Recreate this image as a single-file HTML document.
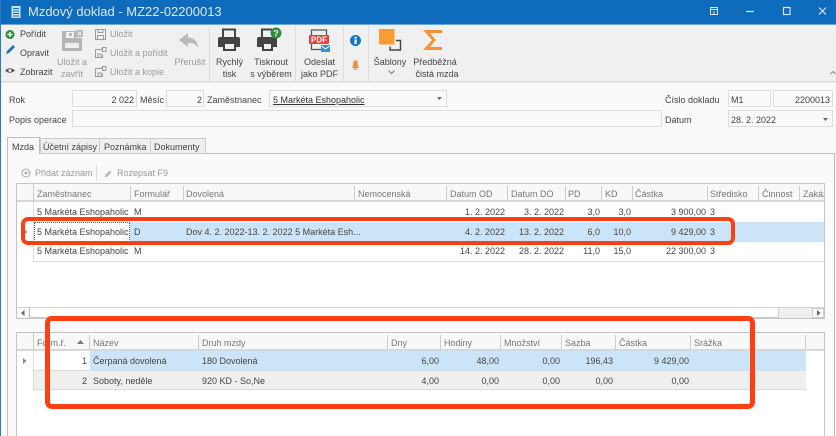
<!DOCTYPE html>
<html lang="cs"><head><meta charset="utf-8"><title>Mzdový doklad</title>
<style>
html,body{margin:0;padding:0;width:836px;height:436px;overflow:hidden;background:#fafafa}
body{position:relative;font-family:"Liberation Sans",sans-serif;font-size:9px;color:#444}
div,span{position:absolute;box-sizing:border-box}
.t{white-space:nowrap;line-height:12px;margin-top:1px}
.r{white-space:nowrap;line-height:12px;text-align:right;margin-top:1px}
.c{white-space:nowrap;line-height:12px;text-align:center;margin-top:1px}
.g{color:#9a9a9a}
.h{color:#777;white-space:nowrap;line-height:12px;margin-top:1px}
.s{width:1px;background:#ccc}
.f{border:1px solid #ddd;background:#fafafa}
svg{position:absolute;overflow:visible}
</style></head><body>
<div style="left:0;top:0;width:836px;height:24px;background:#0f6cbd"></div>
<div style="left:0;top:24px;width:836px;height:1px;background:#6ba6da"></div>
<div style="left:0;top:25px;width:836px;height:56px;background:#f0f0f0"></div>
<div style="left:0;top:81px;width:836px;height:2px;background:#e3e3e3"></div>
<div style="left:0;top:0;width:1px;height:436px;background:#2a7cc7"></div>

<svg style="left:10px;top:5px" width="13" height="14"><rect x="1.5" y="1" width="9" height="12" fill="#cfe2f3"/><path d="M3 3.5h6M3 6h6M3 8.5h6M3 11h6" stroke="#0f6cbd"/></svg>
<div class="t" style="left:28px;top:2px;font-size:13px;line-height:18px;color:#dbe9f6">Mzdový doklad - MZ22-02200013</div>
<svg style="left:709px;top:6px" width="120" height="12" fill="none" stroke="#d6e6f5"><rect x="1.5" y="1.5" width="7" height="7"/><path d="M1.5 3.5h7M5 5v4" stroke-width="1"/><path d="M37 5.5h8" stroke-width="1.2"/><rect x="74.5" y="1.5" width="6.5" height="7" stroke-width="1.2"/><path d="M110 1.500l7 7M117 1.500l-7 7" stroke-width="1.2"/></svg>

<!-- toolbar separators -->
<div class="s" style="left:209px;top:26px;height:55px;background:#ddd"></div>
<div class="s" style="left:295px;top:26px;height:55px;background:#ddd"></div>
<div class="s" style="left:343px;top:26px;height:55px;background:#ddd"></div>
<div class="s" style="left:368px;top:26px;height:55px;background:#ddd"></div>

<svg style="left:5px;top:29px" width="11" height="50">
<circle cx="5" cy="5.500" r="4.500" fill="#2e8b3d"/><path d="M2.500 5.500h5M5 3v5" stroke="#fff" stroke-width="1.400"/>
<path d="M1 25l1-3 6-6 2 2-6 6z" fill="#1c6fc4"/>
<path d="M0 41.500q5-4.500 10 0q-5 4.500-10 0z" fill="#555"/><circle cx="5" cy="41.500" r="1.500" fill="#f0f0f0"/></svg>
<div class="t" style="left:20px;top:27px">Pořídit</div>
<div class="t" style="left:20px;top:46px">Opravit</div>
<div class="t" style="left:20px;top:65px">Zobrazit</div>

<svg style="left:61px;top:29px" width="22" height="23"><path d="M1 2h14v7h6v13H1z" fill="#b5b5b5"/><rect x="4" y="14" width="14" height="5" fill="#f0f0f0"/><rect x="5" y="3" width="8" height="6" fill="#f0f0f0"/><rect x="8" y="4" width="3" height="3" fill="#b5b5b5"/><rect x="15" y="1" width="7" height="7" fill="#b5b5b5"/><path d="M16.500 2.500l4 4M20.500 2.500l-4 4" stroke="#f0f0f0"/></svg>
<div class="c g" style="left:52px;top:55px;width:40px">Uložit a</div>
<div class="c g" style="left:52px;top:67px;width:40px">zavřít</div>

<svg style="left:95px;top:29px" width="12" height="50" fill="none" stroke="#9a9a9a"><path d="M.5 .5h10v10H.5zM3 .5v3h5v-3M2.500 10.500v-4h6v4"/><path d="M.5 20.500h6v-1M.5 20.500v8h7v-3M3 28v-3h3v3M7.500 18.500h3.500v4h-3.500z"/><path d="M.5 39.500h6v-1M.5 39.500v8h7v-3M3 47v-3h3v3M7.500 37.500h3.500v4h-3.500z"/></svg>
<div class="t g" style="left:110px;top:27px">Uložit</div>
<div class="t g" style="left:110px;top:46px">Uložit a pořídit</div>
<div class="t g" style="left:110px;top:65px">Uložit a kopie</div>

<svg style="left:179px;top:33px" width="20" height="16"><path d="M0 7L9 0v4.500c6 0 10 4 10.500 11-2-4-5-5.500-10.500-5.500V14z" fill="#b9b9b9"/></svg>
<div class="c g" style="left:170px;top:55px;width:40px">Přerušit</div>

<svg style="left:218px;top:28px" width="23" height="24"><path d="M5 9V1.500h12V9" fill="#f0f0f0" stroke="#444" stroke-width="2"/><path d="M0 11q0-2 2-2h18q2 0 2 2v8h-4v-4H5v4H0z" fill="#444"/><rect x="6" y="15" width="11" height="7" fill="#f0f0f0" stroke="#444" stroke-width="2"/></svg>
<div class="c" style="left:209px;top:55px;width:41px">Rychlý</div>
<div class="c" style="left:209px;top:67px;width:41px">tisk</div>

<svg style="left:257px;top:28px" width="25" height="24"><path d="M5 9V1.500h10" fill="none" stroke="#444" stroke-width="2"/><path d="M0 11q0-2 2-2h16q2 0 2 2v8h-4v-4H5v4H0z" fill="#444"/><rect x="6" y="15" width="9" height="7" fill="#f0f0f0" stroke="#444" stroke-width="2"/><circle cx="19" cy="5" r="5.500" fill="#2e8b3d"/><text x="19" y="8.500" font-size="9" font-weight="bold" fill="#fff" text-anchor="middle" font-family="Liberation Sans">?</text></svg>
<div class="c" style="left:249px;top:55px;width:44px">Tisknout</div>
<div class="c" style="left:247px;top:67px;width:48px">s výběrem</div>

<svg style="left:309px;top:29px" width="22" height="24"><path d="M2.500 8V1h15v8M2.500 15v5.500h10" fill="none" stroke="#555" stroke-width="1.300"/><rect x="0" y="6" width="20" height="9" rx="1" fill="#e8403f"/><text x="10" y="13.500" font-size="8" font-weight="bold" fill="#fff" text-anchor="middle" font-family="Liberation Sans">PDF</text><rect x="12" y="16" width="9" height="7" fill="#2f8fd8"/><path d="M12.500 17l4 3 4-3" fill="none" stroke="#fff"/></svg>
<div class="c" style="left:296px;top:55px;width:47px">Odeslat</div>
<div class="c" style="left:296px;top:67px;width:47px">jako PDF</div>

<svg style="left:350px;top:35px" width="12" height="36"><circle cx="5.500" cy="5.500" r="5.500" fill="#1577c9"/><rect x="4.500" y="4.500" width="2.200" height="4.500" fill="#fff"/><rect x="4.500" y="1.800" width="2.200" height="1.800" fill="#fff"/><path d="M1.500 33q1.500-1 1.500-3.500 0-4 2.500-4.500 2.500.5 2.500 4.500 0 2.500 1.500 3.500z" fill="#f7943a"/><rect x="4" y="33.500" width="3" height="1.500" fill="#f7943a"/></svg>

<svg style="left:379px;top:29px" width="23" height="23"><path d="M17 11.500h4.500v9.500H11v-3.500" fill="none" stroke="#444" stroke-width="1.400"/><rect x="0" y="0" width="15.500" height="15.500" fill="#ff9a35"/></svg>
<div class="c" style="left:369px;top:55px;width:42px">Šablony</div>
<svg style="left:388px;top:70px" width="8" height="5"><path d="M.5 .5L3.500 3.500 6.500 .5" fill="none" stroke="#777"/></svg>

<svg style="left:424px;top:30px" width="20" height="21"><path d="M18 1.500H2.500L10 10 2.500 18.500H18" fill="none" stroke="#f59331" stroke-width="3"/></svg>
<div class="c" style="left:412px;top:55px;width:46px">Předběžná</div>
<div class="c" style="left:412px;top:67px;width:50px">čistá mzda</div>

<svg style="left:830px;top:70px" width="6" height="5"><path d="M.5 4L3 1.500 5.500 4" fill="none" stroke="#888"/></svg>

<!-- form -->
<div class="t" style="left:9px;top:93px">Rok</div>
<div class="f" style="left:72px;top:90px;width:65px;height:17px"></div><div class="r" style="left:72px;top:93px;width:62px">2 022</div>
<div class="t" style="left:140px;top:93px">Měsíc</div>
<div class="f" style="left:166px;top:90px;width:38px;height:17px"></div><div class="r" style="left:166px;top:93px;width:36px">2</div>
<div class="t" style="left:207px;top:93px">Zaměstnanec</div>
<div class="f" style="left:269px;top:90px;width:178px;height:17px"></div>
<div class="t" style="left:273px;top:93px;text-decoration:underline;color:#333">5 Markéta Eshopaholic</div>
<svg style="left:437px;top:97px" width="6" height="3"><path d="M0 0h5L2.500 3z" fill="#666"/></svg>
<div class="t" style="left:9px;top:113px">Popis operace</div>
<div class="f" style="left:72px;top:110px;width:590px;height:17px"></div>

<div class="t" style="left:665px;top:93px">Číslo dokladu</div>
<div class="f" style="left:728px;top:90px;width:43px;height:17px"></div><div class="t" style="left:731px;top:93px">M1</div>
<div class="f" style="left:773px;top:90px;width:60px;height:17px"></div><div class="r" style="left:773px;top:93px;width:57px">2200013</div>
<div class="t" style="left:665px;top:113px">Datum</div>
<div class="f" style="left:728px;top:110px;width:105px;height:17px"></div><div class="t" style="left:731px;top:113px">28. 2. 2022</div>
<svg style="left:823px;top:118px" width="6" height="3"><path d="M0 0h5L2.500 3z" fill="#666"/></svg>

<!-- tabs -->
<div style="left:7px;top:153px;width:828px;height:290px;border:1px solid #bdbdbd;background:#fafafa"></div>
<div style="left:40px;top:138px;width:60px;height:16px;background:#efefef;border:1px solid #ccc"></div>
<div style="left:99px;top:138px;width:52px;height:16px;background:#efefef;border:1px solid #ccc"></div>
<div style="left:150px;top:138px;width:56px;height:16px;background:#efefef;border:1px solid #ccc"></div>
<div style="left:7px;top:137px;width:33px;height:17px;background:#fafafa;border:1px solid #bdbdbd;border-bottom:0"></div>
<div class="t" style="left:12px;top:140px">Mzda</div>
<div class="t" style="left:43px;top:140px">Účetní zápisy</div>
<div class="t" style="left:104px;top:140px">Poznámka</div>
<div class="t" style="left:154px;top:140px">Dokumenty</div>

<svg style="left:21px;top:168px" width="90" height="11" fill="none" stroke="#aaa"><circle cx="5" cy="5" r="4"/><path d="M3 5h4M5 3v4"/><path d="M83.500 9.500l1-3 4-4 2 2-4 4z" fill="#bbb" stroke="none"/></svg>
<div class="t g" style="left:35px;top:166px">Přidat záznam</div>
<div class="s" style="left:96px;top:165px;height:16px;background:#ddd"></div>
<div class="t g" style="left:117px;top:166px">Rozepsat F9</div>

<!-- grid 1 -->
<div style="left:16px;top:183px;width:809px;height:136px;border:1px solid #c4c4c4;background:#fff"></div>
<div style="left:17px;top:184px;width:807px;height:18px;background:#f8f8f8;border-bottom:2px solid #d8d8d8"></div>
<div class="s" style="left:33px;top:184px;height:18px"></div>
<div class="s" style="left:130px;top:186px;height:14px"></div>
<div class="s" style="left:183px;top:186px;height:14px"></div>
<div class="s" style="left:354px;top:186px;height:14px"></div>
<div class="s" style="left:446px;top:186px;height:14px"></div>
<div class="s" style="left:507px;top:186px;height:14px"></div>
<div class="s" style="left:565px;top:186px;height:14px"></div>
<div class="s" style="left:601px;top:186px;height:14px"></div>
<div class="s" style="left:632px;top:186px;height:14px"></div>
<div class="s" style="left:707px;top:186px;height:14px"></div>
<div class="s" style="left:758px;top:186px;height:14px"></div>
<div class="s" style="left:799px;top:186px;height:14px"></div>
<div class="h" style="left:37px;top:187px">Zaměstnanec</div>
<div class="h" style="left:134px;top:187px">Formulář</div>
<div class="h" style="left:186px;top:187px">Dovolená</div>
<div class="h" style="left:358px;top:187px">Nemocenská</div>
<div class="h" style="left:450px;top:187px">Datum OD</div>
<div class="h" style="left:511px;top:187px">Datum DO</div>
<div class="h" style="left:568px;top:187px">PD</div>
<div class="h" style="left:605px;top:187px">KD</div>
<div class="h" style="left:635px;top:187px">Částka</div>
<div class="h" style="left:710px;top:187px">Středisko</div>
<div class="h" style="left:762px;top:187px">Činnost</div>
<div class="h" style="left:803px;top:187px;width:21px;overflow:hidden">Zakázka</div>

<div style="left:33px;top:202px;width:1px;height:60px;background:#ddd"></div>
<div style="left:33px;top:261px;width:791px;height:1px;background:#ddd"></div>
<div style="left:34px;top:222px;width:790px;height:20px;background:#cce4f7"></div>
<div style="left:34px;top:222px;width:96px;height:20px;background:#fff;border:1px dotted #666"></div>

<div class="t" style="left:37px;top:205px">5 Markéta Eshopaholic</div><div class="t" style="left:134px;top:205px">M</div>
<div class="t" style="left:37px;top:225px">5 Markéta Eshopaholic</div><div class="t" style="left:134px;top:225px">D</div>
<div class="t" style="left:37px;top:244px">5 Markéta Eshopaholic</div><div class="t" style="left:134px;top:244px">M</div>
<div class="t" style="left:186px;top:225px">Dov 4. 2. 2022-13. 2. 2022 5 Markéta Esh...</div>
<div class="r" style="left:446px;top:205px;width:59px">1. 2. 2022</div><div class="r" style="left:507px;top:205px;width:57px">3. 2. 2022</div>
<div class="r" style="left:446px;top:225px;width:59px">4. 2. 2022</div><div class="r" style="left:507px;top:225px;width:57px">13. 2. 2022</div>
<div class="r" style="left:446px;top:244px;width:59px">14. 2. 2022</div><div class="r" style="left:507px;top:244px;width:57px">28. 2. 2022</div>
<div class="r" style="left:565px;top:205px;width:35px">3,0</div><div class="r" style="left:601px;top:205px;width:30px">3,0</div><div class="r" style="left:632px;top:205px;width:74px">3 900,00</div><div class="t" style="left:710px;top:205px">3</div>
<div class="r" style="left:565px;top:225px;width:35px">6,0</div><div class="r" style="left:601px;top:225px;width:30px">10,0</div><div class="r" style="left:632px;top:225px;width:74px">9 429,00</div><div class="t" style="left:710px;top:225px">3</div>
<div class="r" style="left:565px;top:244px;width:35px">11,0</div><div class="r" style="left:601px;top:244px;width:30px">15,0</div><div class="r" style="left:632px;top:244px;width:74px">22 300,00</div><div class="t" style="left:710px;top:244px">3</div>
<svg style="left:25px;top:230px" width="3" height="4"><path d="M0 0l2.500 2L0 4z" fill="#888"/></svg>

<!-- scrollbar -->
<div style="left:17px;top:307px;width:807px;height:11px;background:#efefef;border-top:1px solid #d4d4d4"></div>
<div style="left:17px;top:308px;width:13px;height:10px;background:#fafafa;border-right:1px solid #bbb"></div>
<div style="left:30px;top:308px;width:749px;height:10px;background:#fff;border-right:1px solid #ccc;border-bottom:1px solid #ccc"></div>
<div style="left:812px;top:308px;width:12px;height:10px;background:#fafafa;border:1px solid #ccc"></div>
<svg style="left:21px;top:310px" width="4" height="6"><path d="M3.500 0v6L0 3z" fill="#666"/></svg>
<svg style="left:817px;top:310px" width="4" height="6"><path d="M0 0v6l3.500-3z" fill="#666"/></svg>

<!-- grid 2 -->
<div style="left:16px;top:332px;width:809px;height:110px;border:1px solid #c4c4c4;background:#fff"></div>
<div style="left:17px;top:333px;width:807px;height:18px;background:#f8f8f8;border-bottom:2px solid #d8d8d8"></div>
<div class="s" style="left:33px;top:333px;height:18px"></div>
<div class="s" style="left:89px;top:335px;height:14px"></div>
<div class="s" style="left:198px;top:335px;height:14px"></div>
<div class="s" style="left:387px;top:335px;height:14px"></div>
<div class="s" style="left:440px;top:335px;height:14px"></div>
<div class="s" style="left:500px;top:335px;height:14px"></div>
<div class="s" style="left:561px;top:335px;height:14px"></div>
<div class="s" style="left:615px;top:335px;height:14px"></div>
<div class="s" style="left:690px;top:335px;height:14px"></div>
<div class="s" style="left:805px;top:335px;height:14px"></div>
<div class="h" style="left:37px;top:336px">Form.ř.</div>
<svg style="left:77px;top:340px" width="8" height="4"><path d="M0 4L3.500 0 7 4z" fill="#777"/></svg>
<div class="h" style="left:93px;top:336px">Název</div>
<div class="h" style="left:202px;top:336px">Druh mzdy</div>
<div class="h" style="left:391px;top:336px">Dny</div>
<div class="h" style="left:444px;top:336px">Hodiny</div>
<div class="h" style="left:504px;top:336px">Množství</div>
<div class="h" style="left:565px;top:336px">Sazba</div>
<div class="h" style="left:619px;top:336px">Částka</div>
<div class="h" style="left:694px;top:336px">Srážka</div>

<div style="left:33px;top:351px;width:1px;height:39px;background:#ddd"></div>
<div style="left:90px;top:351px;width:716px;height:19px;background:#cce4f7"></div>
<div style="left:34px;top:370px;width:772px;height:19px;background:#efefef;border-top:1px solid #ddd"></div>
<div style="left:33px;top:389px;width:773px;height:1px;background:#ddd"></div>
<svg style="left:23px;top:358px" width="4" height="6"><path d="M0 0l3.500 3L0 6z" fill="#888"/></svg>

<div class="r" style="left:34px;top:354px;width:53px">1</div><div class="t" style="left:93px;top:354px">Čerpaná dovolená</div><div class="t" style="left:202px;top:354px">180 Dovolená</div>
<div class="r" style="left:387px;top:354px;width:52px">6,00</div><div class="r" style="left:440px;top:354px;width:59px">48,00</div><div class="r" style="left:500px;top:354px;width:60px">0,00</div><div class="r" style="left:561px;top:354px;width:52px">196,43</div><div class="r" style="left:615px;top:354px;width:74px">9 429,00</div>
<div class="r" style="left:34px;top:374px;width:53px">2</div><div class="t" style="left:93px;top:374px">Soboty, neděle</div><div class="t" style="left:202px;top:374px">920 KD - So,Ne</div>
<div class="r" style="left:387px;top:374px;width:52px">4,00</div><div class="r" style="left:440px;top:374px;width:59px">0,00</div><div class="r" style="left:500px;top:374px;width:60px">0,00</div><div class="r" style="left:561px;top:374px;width:52px">0,00</div><div class="r" style="left:615px;top:374px;width:74px">0,00</div>

<!-- red highlights -->
<div style="left:21px;top:217px;width:714px;height:28px;border:4.500px solid #ff3f13;border-radius:7px"></div>
<div style="left:45px;top:316px;width:710px;height:93px;border:5px solid #ff3f13;border-radius:7px"></div>
</body></html>
